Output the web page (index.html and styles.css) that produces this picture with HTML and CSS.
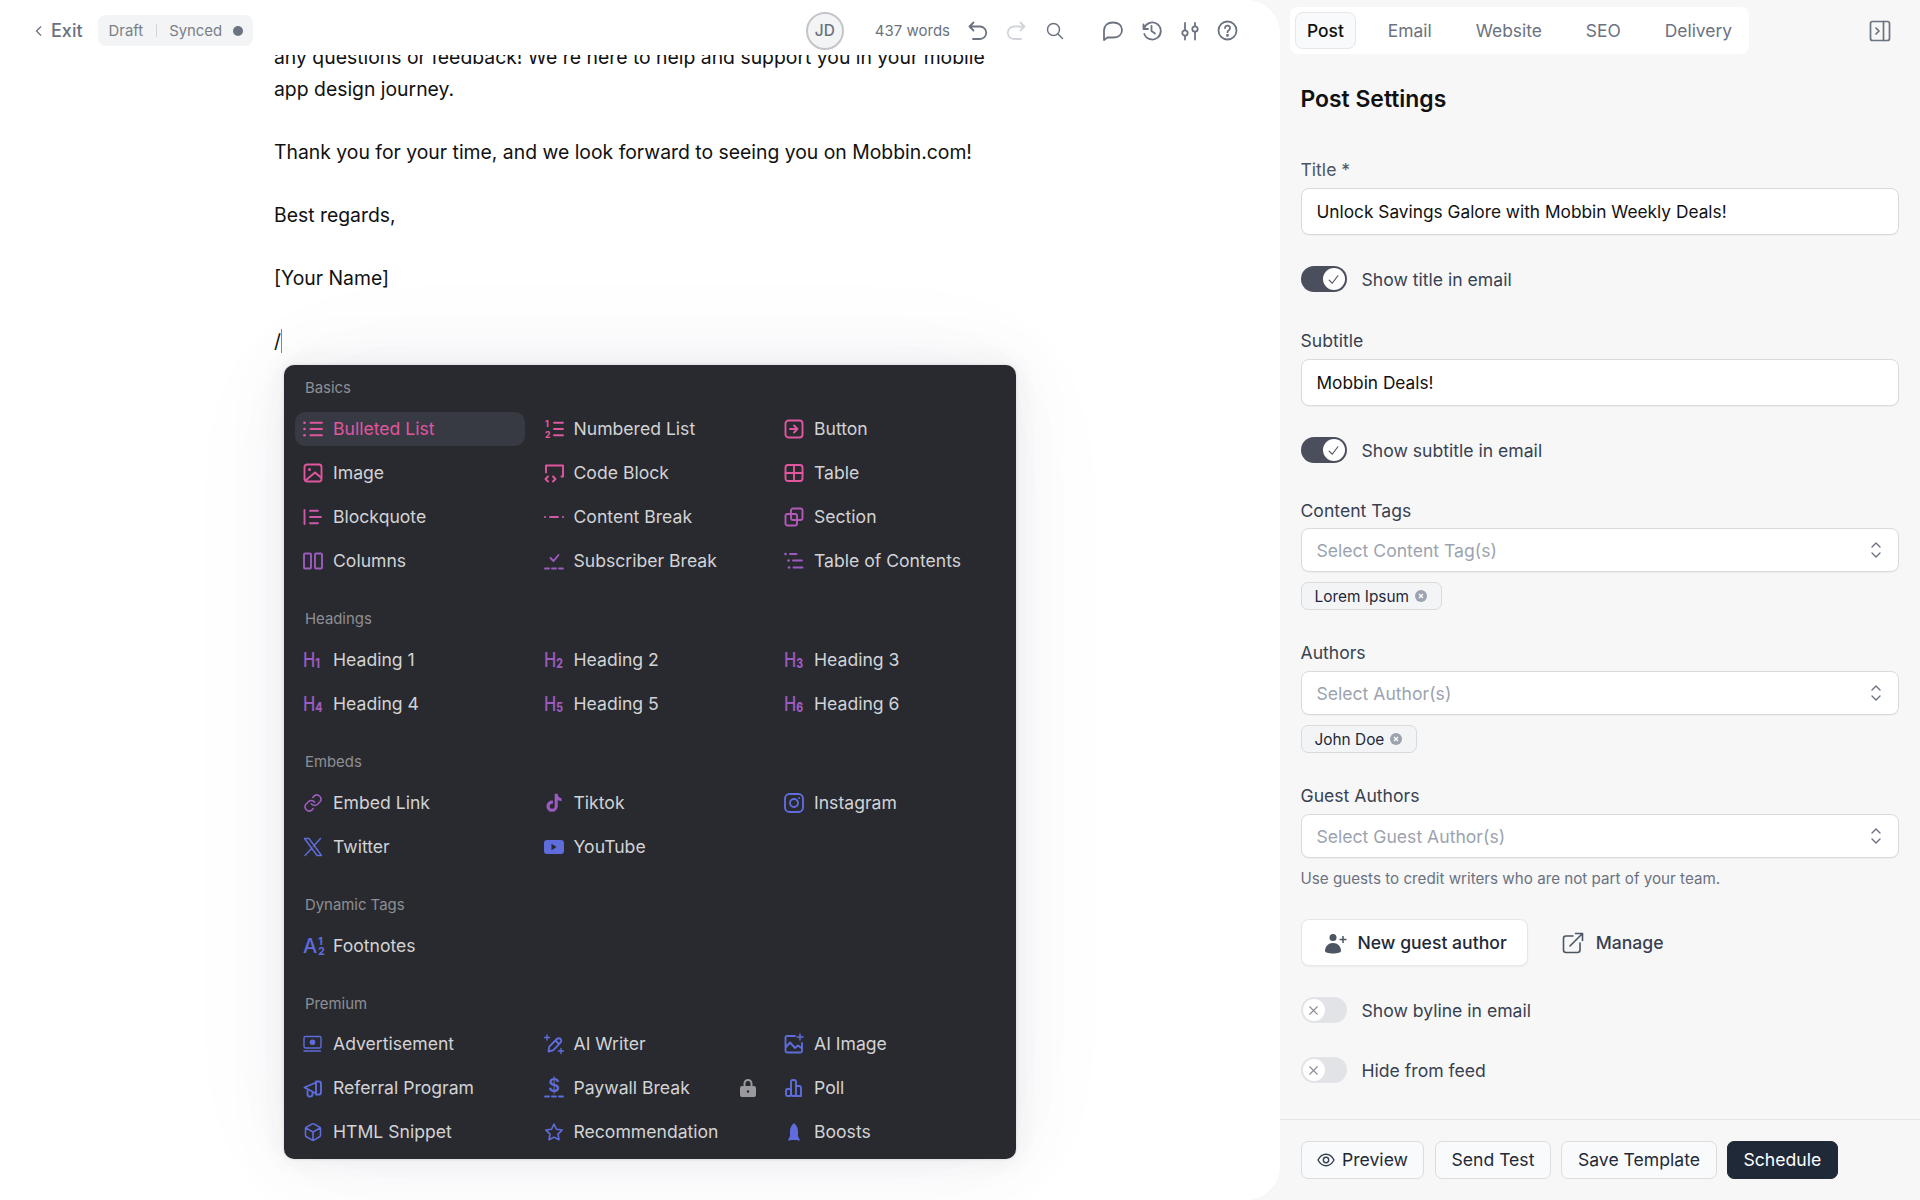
FILE: index.html
```html
<!DOCTYPE html>
<html lang="en">
<head>
    <meta charset="UTF-8">
    <meta name="viewport" content="width=device-width, initial-scale=1.0">
    <title>Post editor</title>
    <link rel="stylesheet" href="styles.css">
</head>
<body>
    <main class="editor">
        <header class="topbar">
            <div class="topbar-left">
                <svg class="chevron" width="8" height="12" viewBox="0 0 8 12"><path d="M6 1.500 1.500 6 6 10.500"/></svg>
                <span class="exit">Exit</span>
                <div class="status">
                    <span>Draft</span>
                    <i class="status-sep"></i>
                    <span>Synced</span>
                    <i class="status-dot"></i>
                </div>
            </div>
            <div class="topbar-right">
                <div class="avatar">JD</div>
                <span class="words">437 words</span>
                <svg class="tool undo" width="20" height="20" viewBox="0 0 20 20"><path d="M5.500 1.500 1.500 5.500l4 4M1.500 5.500H12a6 6 0 0 1 0 12.500H5"/></svg>
                <svg class="tool redo" width="20" height="20" viewBox="0 0 20 20"><path d="M14.500 1.500l4 4-4 4M18.500 5.500H8a6 6 0 0 0 0 12.500h7"/></svg>
                <svg class="tool search" width="18" height="18" viewBox="0 0 18 18"><circle cx="7.500" cy="7.500" r="6"/><path d="m12 12 4.500 4.500"/></svg>
                <svg class="tool comment" width="22" height="22" viewBox="0 0 22 22"><path d="M2 20V10.500C2 5.500 5.500 2.500 11 2.500s9 3 9 7.500-3.500 7.500-9 7.500H5.500z"/></svg>
                <svg class="tool history" width="21" height="21" viewBox="0 0 21 21"><path d="M2.500 4.500v4.500H7M3 9a8.500 8.500 0 1 1 .3 5M10.500 6v5l3.500 2.500"/></svg>
                <svg class="tool sliders" width="18" height="20" viewBox="0 0 18 20"><path d="M4 2v7M4 15v3.500M14 2v3M14 11v7.500"/><circle cx="4" cy="12" r="2.700"/><circle cx="14" cy="8" r="2.700"/></svg>
                <svg class="tool tool-help" width="21" height="21" viewBox="0 0 21 21"><circle cx="10.500" cy="10.500" r="9"/><path d="M8 8a2.500 2.500 0 1 1 3.800 2.200c-.9.500-1.300 1-1.300 2"/><circle class="solid" cx="10.500" cy="15.200" r=".6"/></svg>
            </div>
        </header>

        <div class="doc">
            <p>any questions or feedback! We're here to help and support you in your mobile app design journey.</p>
            <p>Thank you for your time, and we look forward to seeing you on Mobbin.com!</p>
            <p>Best regards,</p>
            <p>[Your Name]</p>
            <p>/<i class="caret"></i></p>
        </div>

        <div class="slash-menu">
            <div class="menu-label">Basics</div>
            <div class="menu-grid">
                <div class="menu-item active c1">
                    <svg class="ico" viewBox="0 0 20 20"><path d="M7.500 3.700H19M7.500 10H19M7.500 16.300H19"/><circle class="solid" cx="1.500" cy="3.700" r="1.300"/><circle class="solid" cx="1.500" cy="10" r="1.300"/><circle class="solid" cx="1.500" cy="16.300" r="1.300"/></svg>
                    <span>Bulleted List</span>
                </div>
                <div class="menu-item c1">
                    <svg class="ico" viewBox="0 0 20 20"><path d="M10 3.700h9M10 10h9M10 16.300h9"/><text class="ico-num" x="1" y="7.500">1</text><text class="ico-num" x="1" y="19">2</text></svg>
                    <span>Numbered List</span>
                </div>
                <div class="menu-item c1">
                    <svg class="ico" viewBox="0 0 20 20"><rect x="1.500" y="1.500" width="17" height="17" rx="3"/><path d="M6 10h7.500M10 6.500l3.500 3.500-3.500 3.500"/></svg>
                    <span>Button</span>
                </div>
                <div class="menu-item c1">
                    <svg class="ico" viewBox="0 0 20 20"><rect x="1.500" y="1.500" width="17" height="17" rx="2.500"/><circle class="solid" cx="6.500" cy="6.500" r="1.500"/><path d="M2.500 17.500 12 9.500l6 5"/></svg>
                    <span>Image</span>
                </div>
                <div class="menu-item c1">
                    <svg class="ico" viewBox="0 0 20 20"><path d="M2 9.500V2.500h17v11h-1.500M4 13.500 1.500 16 4 18.500M9 13.500l2.500 2.500L9 18.500"/></svg>
                    <span>Code Block</span>
                </div>
                <div class="menu-item c1">
                    <svg class="ico" viewBox="0 0 20 20"><rect x="1.500" y="2" width="17" height="16" rx="2.500"/><path d="M1.500 10h17M10 2v16"/></svg>
                    <span>Table</span>
                </div>
                <div class="menu-item c2">
                    <svg class="ico" viewBox="0 0 20 20"><path d="M1.500 3v14M7 3.700h8M7 10h11M7 16.300h8"/></svg>
                    <span>Blockquote</span>
                </div>
                <div class="menu-item c2">
                    <svg class="ico" viewBox="0 0 20 20"><path d="M6 10h8"/><circle class="solid" cx="1" cy="10" r="1.100"/><circle class="solid" cx="19" cy="10" r="1.100"/></svg>
                    <span>Content Break</span>
                </div>
                <div class="menu-item c3">
                    <svg class="ico" viewBox="0 0 20 20"><rect x="1.500" y="7" width="11.500" height="11.500" rx="2"/><rect x="7" y="1.500" width="11.500" height="11.500" rx="2"/></svg>
                    <span>Section</span>
                </div>
                <div class="menu-item c4">
                    <svg class="ico" viewBox="0 0 20 20"><rect x="1" y="2.500" width="7" height="15" rx="1"/><rect x="12" y="2.500" width="7" height="15" rx="1"/></svg>
                    <span>Columns</span>
                </div>
                <div class="menu-item c4">
                    <svg class="ico" viewBox="0 0 20 20"><path d="M6.500 7 9.500 10 14.500 4M1 17.500h4M8 17.500h4M15 17.500h4"/></svg>
                    <span>Subscriber Break</span>
                </div>
                <div class="menu-item c4">
                    <svg class="ico" viewBox="0 0 20 20"><path d="M6 3h6.500M9 9.500h9M9.500 16.500h9"/><circle class="solid" cx="1.500" cy="3" r="1.300"/><circle class="solid" cx="4.500" cy="9.500" r="1.300"/><circle class="solid" cx="5" cy="16.500" r="1.300"/></svg>
                    <span>Table of Contents</span>
                </div>
            </div>

            <div class="menu-label">Headings</div>
            <div class="menu-grid">
                <div class="menu-item c4"><b class="hmark">H<small>1</small></b><span>Heading 1</span></div>
                <div class="menu-item c4"><b class="hmark">H<small>2</small></b><span>Heading 2</span></div>
                <div class="menu-item c4"><b class="hmark">H<small>3</small></b><span>Heading 3</span></div>
                <div class="menu-item c4"><b class="hmark">H<small>4</small></b><span>Heading 4</span></div>
                <div class="menu-item c4"><b class="hmark">H<small>5</small></b><span>Heading 5</span></div>
                <div class="menu-item c4"><b class="hmark">H<small>6</small></b><span>Heading 6</span></div>
            </div>

            <div class="menu-label">Embeds</div>
            <div class="menu-grid">
                <div class="menu-item c4">
                    <svg class="ico" viewBox="0 0 24 24"><path d="M10 13a5 5 0 0 0 7.500.5l3-3a5 5 0 0 0-7-7l-1.700 1.700M14 11a5 5 0 0 0-7.500-.5l-3 3a5 5 0 0 0 7 7l1.700-1.700"/></svg>
                    <span>Embed Link</span>
                </div>
                <div class="menu-item c4">
                    <svg class="ico" viewBox="0 0 24 24"><path class="solid" d="M16.500 1h-3.700v14.800a3 3 0 1 1-3-3c.3 0 .6 0 .9.1V9.100a6.800 6.800 0 1 0 5.800 6.700V8.500a8.200 8.200 0 0 0 4.500 1.300V6.200a4.600 4.600 0 0 1-4.500-5.200z"/></svg>
                    <span>Tiktok</span>
                </div>
                <div class="menu-item c5">
                    <svg class="ico" viewBox="0 0 20 20"><rect x="1" y="1" width="18" height="18" rx="4.500"/><circle cx="10" cy="10" r="4"/><circle class="solid" cx="15" cy="5" r="1"/></svg>
                    <span>Instagram</span>
                </div>
                <div class="menu-item c5">
                    <svg class="ico" viewBox="0 0 20 20"><path class="thin" d="M1.500 1.500h4.500l12.500 17H14zM17.500 1.500l-7 7.700M9 11l-7 7.500"/></svg>
                    <span>Twitter</span>
                </div>
                <div class="menu-item c5">
                    <svg class="ico" viewBox="0 0 20 20"><rect class="solid" x="0" y="3" width="20" height="14" rx="3"/><path class="cut" d="M7.500 6.800v6.400l5-3.200z"/></svg>
                    <span>YouTube</span>
                </div>
            </div>

            <div class="menu-label">Dynamic Tags</div>
            <div class="menu-grid">
                <div class="menu-item c5"><b class="amark">A<small><em>1</em><em>2</em></small></b><span>Footnotes</span></div>
            </div>

            <div class="menu-label tight">Premium</div>
            <div class="menu-grid">
                <div class="menu-item c5">
                    <svg class="ico" viewBox="0 0 20 20"><rect class="thin" x="1" y="2.500" width="17" height="11.500" rx="1.500"/><circle class="solid" cx="9.500" cy="8.200" r="2.800"/><path class="thin" d="M1 17h16.500"/></svg>
                    <span>Advertisement</span>
                </div>
                <div class="menu-item c5">
                    <svg class="ico" viewBox="0 0 20 20"><path d="M4.500 17.500l.8-4.800 7.500-7.700a2.500 2.500 0 0 1 3.700 3.700l-7.400 7.700zM11.500 6.500l3.500 3.500"/><path class="thin" d="M3 1v5M.5 3.500h5M17 14.500v5M14.500 17h5"/></svg>
                    <span>AI Writer</span>
                </div>
                <div class="menu-item c5">
                    <svg class="ico" viewBox="0 0 20 20"><path d="M11 2H3a1.500 1.500 0 0 0-1.500 1.500V17A1.500 1.500 0 0 0 3 18.500h13.500A1.500 1.500 0 0 0 18 17V9M2 13l4-4.500 5 5.500 3-2.500 4 3"/><path class="thin" d="M16 0v6M13 3h6"/></svg>
                    <span>AI Image</span>
                </div>
                <div class="menu-item c5">
                    <svg class="ico" viewBox="0 0 20 20"><path d="M1.500 9.500 13 4.500v11zM13 3.500h3a2 2 0 0 1 2 2v9a2 2 0 0 1-2 2h-3M4.500 13v3a2.500 2.500 0 0 0 5 .2V15"/></svg>
                    <span>Referral Program</span>
                </div>
                <div class="menu-item c5">
                    <svg class="ico" viewBox="0 0 20 20"><text class="ico-dollar" x="10" y="14">$</text><path d="M1 18.500h4M8 18.500h4M15 18.500h4"/></svg>
                    <span>Paywall Break</span>
                    <svg class="lock" width="16" height="20" viewBox="0 0 16 20"><path d="M3.500 8V5.500a4.500 4.500 0 0 1 9 0V8h-2V5.500a2.500 2.500 0 0 0-5 0V8z"/><path fill-rule="evenodd" d="M2 8h12a2 2 0 0 1 2 2v7a2 2 0 0 1-2 2H2a2 2 0 0 1-2-2v-7a2 2 0 0 1 2-2zm6 4.200a1.300 1.300 0 1 0 0 2.600 1.300 1.300 0 0 0 0-2.600z"/></svg>
                </div>
                <div class="menu-item c5">
                    <svg class="ico" viewBox="0 0 20 20"><rect x="2" y="11" width="5" height="7" rx="1.500"/><rect x="7" y="2" width="5" height="16" rx="2"/><path d="M12 8h3a2 2 0 0 1 2 2v8h-5"/></svg>
                    <span>Poll</span>
                </div>
                <div class="menu-item c5">
                    <svg class="ico" viewBox="0 0 24 24"><path d="M21 16V8a2 2 0 0 0-1-1.700l-7-4a2 2 0 0 0-2 0l-7 4A2 2 0 0 0 3 8v8a2 2 0 0 0 1 1.700l7 4a2 2 0 0 0 2 0l7-4a2 2 0 0 0 1-1.700zM3.300 7 12 12l8.700-5M12 22V12"/></svg>
                    <span>HTML Snippet</span>
                </div>
                <div class="menu-item c5">
                    <svg class="ico" viewBox="0 0 24 24"><path d="M12 2.500l3 6.200 6.800 1-5 4.800 1.200 6.800-6-3.200-6 3.200 1.200-6.800-5-4.800 6.800-1z"/></svg>
                    <span>Recommendation</span>
                </div>
                <div class="menu-item c5">
                    <svg class="ico" viewBox="0 0 20 20"><path class="solid" d="M10 1c2.500 2 4 5 4 8v5l1.700 3.800c.2.600-.3 1.200-.9 1L13 18H7l-1.800.8c-.6.200-1.100-.4-.9-1L6 14V9c0-3 1.500-6 4-8z"/></svg>
                    <span>Boosts</span>
                </div>
            </div>
        </div>
    </main>

    <aside class="sidebar">
        <div class="sidebar-top">
            <nav class="tabs">
                <span class="tab current">Post</span>
                <span class="tab">Email</span>
                <span class="tab">Website</span>
                <span class="tab">SEO</span>
                <span class="tab">Delivery</span>
            </nav>
            <svg class="panel-icon" width="22" height="22" viewBox="0 0 22 22"><rect x="1.500" y="1.500" width="19" height="19" rx="2"/><path d="M14.500 1.500v19M7 8l3 3-3 3"/></svg>
        </div>

        <div class="settings">
            <h2>Post Settings</h2>

            <label class="field-label first">Title *</label>
            <div class="input tall">Unlock Savings Galore with Mobbin Weekly Deals!</div>
            <div class="switch-row after-input">
                <span class="switch on"><i><svg viewBox="0 0 12 12"><path d="M2.500 6.500 5 9l4.500-6"/></svg></i></span>
                <span>Show title in email</span>
            </div>

            <label class="field-label gap-38">Subtitle</label>
            <div class="input tall">Mobbin Deals!</div>
            <div class="switch-row after-input">
                <span class="switch on"><i><svg viewBox="0 0 12 12"><path d="M2.500 6.500 5 9l4.500-6"/></svg></i></span>
                <span>Show subtitle in email</span>
            </div>

            <label class="field-label gap-37">Content Tags</label>
            <div class="input select">
                <span>Select Content Tag(s)</span>
                <svg width="12" height="18" viewBox="0 0 12 18"><path d="M2 6l4-4 4 4M2 12l4 4 4-4"/></svg>
            </div>
            <div class="tag">Lorem Ipsum<i class="tag-x"><svg viewBox="0 0 12 12"><path d="M4 4l4 4M8 4l-4 4"/></svg></i></div>

            <label class="field-label gap-32">Authors</label>
            <div class="input select">
                <span>Select Author(s)</span>
                <svg width="12" height="18" viewBox="0 0 12 18"><path d="M2 6l4-4 4 4M2 12l4 4 4-4"/></svg>
            </div>
            <div class="tag">John Doe<i class="tag-x"><svg viewBox="0 0 12 12"><path d="M4 4l4 4M8 4l-4 4"/></svg></i></div>

            <label class="field-label gap-32">Guest Authors</label>
            <div class="input select">
                <span>Select Guest Author(s)</span>
                <svg width="12" height="18" viewBox="0 0 12 18"><path d="M2 6l4-4 4 4M2 12l4 4 4-4"/></svg>
            </div>
            <p class="help">Use guests to credit writers who are not part of your team.</p>

            <div class="guest-actions">
                <button class="btn-guest">
                    <svg width="24" height="24" viewBox="0 0 24 24"><circle cx="9" cy="6.500" r="3.500"/><path d="M1 20c0-4.500 3.500-8 8-8s8 3.500 8 8c0 1.500-3.500 2.500-8 2.500S1 21.500 1 20z"/><path class="plus" d="M19 5v7M15.500 8.500h7"/></svg>
                    New guest author
                </button>
                <span class="manage">
                    <svg width="22" height="22" viewBox="0 0 22 22"><path d="M11 4H4a2.500 2.500 0 0 0-2.500 2.500V18A2.500 2.500 0 0 0 4 20.500h11.500A2.500 2.500 0 0 0 18 18v-7M8 14 20.500 1.500M13.500 1.500h7v7"/></svg>
                    Manage
                </span>
            </div>

            <div class="switch-row byline">
                <span class="switch"><i><svg viewBox="0 0 12 12"><path d="M3 3l6 6M9 3l-6 6"/></svg></i></span>
                <span>Show byline in email</span>
            </div>
            <div class="switch-row feed">
                <span class="switch"><i><svg viewBox="0 0 12 12"><path d="M3 3l6 6M9 3l-6 6"/></svg></i></span>
                <span>Hide from feed</span>
            </div>
        </div>

        <footer class="actions">
            <button class="btn">
                <svg width="18" height="18" viewBox="0 0 18 18"><path d="M1 9c2-3.800 4.700-5.700 8-5.700s6 1.900 8 5.700c-2 3.800-4.700 5.700-8 5.700S3 12.800 1 9z"/><circle cx="9" cy="9" r="2.700"/></svg>
                Preview
            </button>
            <button class="btn">Send Test</button>
            <button class="btn">Save Template</button>
            <button class="btn dark">Schedule</button>
        </footer>
    </aside>
</body>
</html>
```

FILE: styles.css
```css
* { box-sizing: border-box; }
html, body { height: 100%; }
body { margin: 0; height: 1200px; overflow: hidden; display: flex; background-color: #f7f7f8; font-family: Inter, "Liberation Sans", sans-serif; color: #111; }
svg { display: block; }
i { display: block; font-style: normal; }

/* left side */
.editor { position: relative; width: 1280px; height: 1200px; flex: none; background-color: white; border-radius: 0 34px 34px 0; overflow: hidden; }
.topbar { position: relative; z-index: 2; height: 55px; background-color: white; display: flex; justify-content: space-between; padding: 15px 42px 0 35px; }
.topbar-left { display: flex; align-items: center; height: 31px; }
.chevron { fill: none; stroke: #6b7280; stroke-width: 1.3; }
.exit { margin-left: 8px; font-size: 18px; font-weight: 500; color: #6b7280; }
.status { display: flex; align-items: center; height: 31px; margin-left: 15.500px; padding: 0 10px 0 10.500px; background-color: #f3f4f6; border-radius: 8px; font-size: 14.9px; color: #7b7f86; }
.status-sep { width: 1px; height: 13px; margin: 0 12.500px; background-color: #d1d5db; }
.status-dot { width: 10px; height: 10px; margin-left: 11px; border-radius: 50%; background-color: #6b7280; }
.topbar-right { display: flex; align-items: center; height: 31px; }
.avatar { width: 38px; height: 38px; display: flex; align-items: center; justify-content: center; border: 2px solid #c4c5c8; border-radius: 50%; background-color: #f3f4f6; font-size: 15.4px; font-weight: 500; color: #6b7280; }
.words { margin-left: 31px; font-size: 15px; color: #6b7280; }
.tool { fill: none; stroke: #6b7280; stroke-width: 1.8; stroke-linecap: round; stroke-linejoin: round; }
.tool .solid { fill: #6b7280; }
.undo { margin-left: 18px; }
.redo { margin-left: 18px; stroke: #d1d5db; }
.search { margin-left: 20px; stroke-width: 1.5; }
.comment { margin-left: 38px; }
.history { margin-left: 17px; }
.sliders { margin-left: 19px; }
.tool-help { margin-left: 18px; }

.doc { width: 730px; margin: -13px 0 0 274px; font-size: 19.36px; line-height: 31.6px; color: #111; }
.doc p { margin: 0 0 31.5px; }
.caret { display: inline-block; width: 1.5px; height: 24px; background-color: #e0569f; vertical-align: -5px; }

/* slash menu */
.slash-menu { position: absolute; z-index: 3; left: 284px; top: 365px; width: 732px; height: 794px; padding: 13px 11px 0; background-color: #292a2f; border-radius: 10px; box-shadow: 0 0 3px rgba(0, 0, 0, .14), 0 0 24px rgba(60, 60, 90, .07), 0 0 70px rgba(60, 60, 90, .05), 0 0 140px rgba(60, 60, 90, .03); }
.menu-label { height: 20px; padding-left: 10px; margin-bottom: 14px; font-size: 14.9px; line-height: 20px; color: #8e8f95; }
.menu-label.tight { margin-bottom: 13px; }
.menu-grid { display: grid; grid-template-columns: repeat(3, 230px); column-gap: 10.5px; row-gap: 10px; margin-bottom: 31px; }
.menu-item { display: flex; align-items: center; gap: 10px; height: 34px; padding: 0 8px; border-radius: 10px; font-size: 17.6px; color: #d2d3d6; }
.menu-item span { margin-top: -2px; }
.menu-item.active { background-color: #373943; color: #e0569f; }
.ico { width: 20px; height: 20px; flex: none; overflow: visible; fill: none; stroke: currentColor; stroke-width: 1.9; stroke-linecap: round; stroke-linejoin: round; }
.ico .solid { fill: currentColor; stroke: none; }
.ico .thin { stroke-width: 1.4; }
.ico .cut { fill: #292a2f; stroke: none; }
.ico-num { font-size: 8.5px; font-weight: 800; fill: currentColor; stroke: none; }
.ico-dollar { font-size: 18px; font-weight: 600; fill: currentColor; stroke: none; text-anchor: middle; }
.c1 svg, .c1 .hmark { color: #e0569f; }
.c2 svg { color: #cf58ab; }
.c3 svg { color: #b35ab9; }
.c4 svg, .c4 .hmark { color: #9c5bc0; }
.c5 svg, .c5 .amark { color: #5f6cdc; }
.hmark, .amark { display: flex; align-items: flex-end; flex: none; height: 22px; font-weight: 500; line-height: 22px; white-space: nowrap; }
.hmark { width: 25px; margin-right: -5px; font-size: 20.6px; transform: scaleX(.8); transform-origin: left center; }
.hmark small { font-size: 13px; font-weight: 800; line-height: 16px; }
.amark { width: 20px; font-size: 20px; }
.amark small { display: flex; flex-direction: column; margin: 0 0 1px 1px; font-size: 10px; font-weight: 800; line-height: 10px; }
.amark em { font-style: normal; }
.menu-item .lock { margin-left: auto; margin-right: 2px; fill: #9a9a9e; stroke: none; color: #9a9a9e; }

/* right side */
.sidebar { flex: 1; display: flex; flex-direction: column; height: 1200px; }
.sidebar-top { display: flex; justify-content: space-between; padding: 7px 29px 0 10px; height: 84px; }
.tabs { display: flex; gap: 20px; align-items: center; height: 47px; padding: 0 5px; background-color: white; border-radius: 8px; }
.tab { display: flex; align-items: center; height: 37px; padding: 0 11px; border: 1px solid transparent; border-radius: 8px; font-size: 17.4px; color: #6b7280; }
.tab.current { background-color: #f9fafb; border-color: #e5e7eb; color: #111; font-weight: 500; }
.panel-icon { margin-top: 13px; fill: none; stroke: #6b7280; stroke-width: 1.7; stroke-linecap: round; stroke-linejoin: round; }

.settings { flex: 1; padding: 0 21px 0 20.5px; }
.settings h2 { margin: 0; font-size: 22.9px; font-weight: 600; line-height: 30px; color: #111; }
.field-label { display: block; height: 22px; margin-bottom: 7px; font-size: 17.6px; line-height: 22px; color: #374151; }
.field-label.first { margin-top: 45px; color: #4b5563; }
.gap-38 { margin-top: 38px; }
.field-label.gap-37 { margin-top: 37px; margin-bottom: 6px; }
.gap-32 { margin-top: 32px; }
.input { display: flex; align-items: center; height: 44px; padding: 0 15px; background-color: white; border: 1.5px solid #d8dade; border-radius: 8px; box-shadow: 0 1px 1px rgba(0, 0, 0, .04); font-size: 17.3px; color: #111; }
.input.tall { height: 47px; }
.select { justify-content: space-between; color: #9ca3af; font-size: 17.6px; }
.select svg { margin-right: 1px; fill: none; stroke: #6b7280; stroke-width: 1.4; stroke-linecap: round; stroke-linejoin: round; }
.tag { display: inline-flex; align-items: center; gap: 6px; height: 28px; margin-top: 10px; padding: 0 14px 0 13px; background-color: #f3f4f6; border: 1px solid #d8dade; border-radius: 7px; font-size: 15.4px; color: #1f2937; vertical-align: top; }
.tag-x { width: 12px; height: 12px; border-radius: 50%; background-color: #9ca3af; }
.tag-x svg { fill: none; stroke: white; stroke-width: 1.3; }

.switch-row { display: flex; align-items: center; gap: 15px; font-size: 17.6px; color: #374151; }
.after-input { margin-top: 31px; }
.byline { margin-top: 31px; }
.feed { margin-top: 34px; }
.switch { display: flex; align-items: center; width: 46px; height: 26px; padding: 2px; background-color: #e2e3e6; border-radius: 13px; }
.switch i { width: 22px; height: 22px; padding: 3.5px; border-radius: 50%; background-color: white; }
.switch svg { fill: none; stroke: #8b8e96; stroke-width: .9; stroke-linecap: round; }
.switch.on { justify-content: flex-end; background-color: #4b4e5c; }
.switch.on svg { stroke: #4b4e5c; }

.help { margin: 11px 0 0; font-size: 15.2px; line-height: 20px; color: #6b7280; }
.guest-actions { display: flex; align-items: center; gap: 34px; margin-top: 30px; }
.btn-guest { display: flex; align-items: center; gap: 10px; height: 47px; padding: 0 20px 0 22px; background-color: white; border: 1px solid #e5e7eb; border-radius: 8px; box-shadow: 0 1px 2px rgba(0, 0, 0, .05); font: 500 17.6px Inter, "Liberation Sans", sans-serif; color: #1f2937; }
.btn-guest svg { fill: #4b5563; }
.btn-guest .plus { fill: none; stroke: #4b5563; stroke-width: 1.5; }
.manage { display: flex; align-items: center; gap: 12px; font-size: 17.6px; font-weight: 500; color: #374151; }
.manage svg { fill: none; stroke: #4b5563; stroke-width: 1.6; stroke-linecap: round; stroke-linejoin: round; }

.actions { display: flex; gap: 10.5px; height: 81px; padding: 21px 0 0 20.5px; border-top: 1.5px solid #e3e4e8; }
.btn { display: flex; align-items: center; gap: 7.5px; height: 38px; padding: 0 15.5px 1px; background-color: #f9fafb; border: 1.5px solid #dcdde1; border-radius: 7px; font: 400 17.6px Inter, "Liberation Sans", sans-serif; color: #1f2937; }
.btn svg { fill: none; stroke: #374151; stroke-width: 1.4; }
.btn:first-child { padding-left: 15px; }
.btn.dark { background-color: #1f2937; border-color: #1f2937; color: white; }
```
